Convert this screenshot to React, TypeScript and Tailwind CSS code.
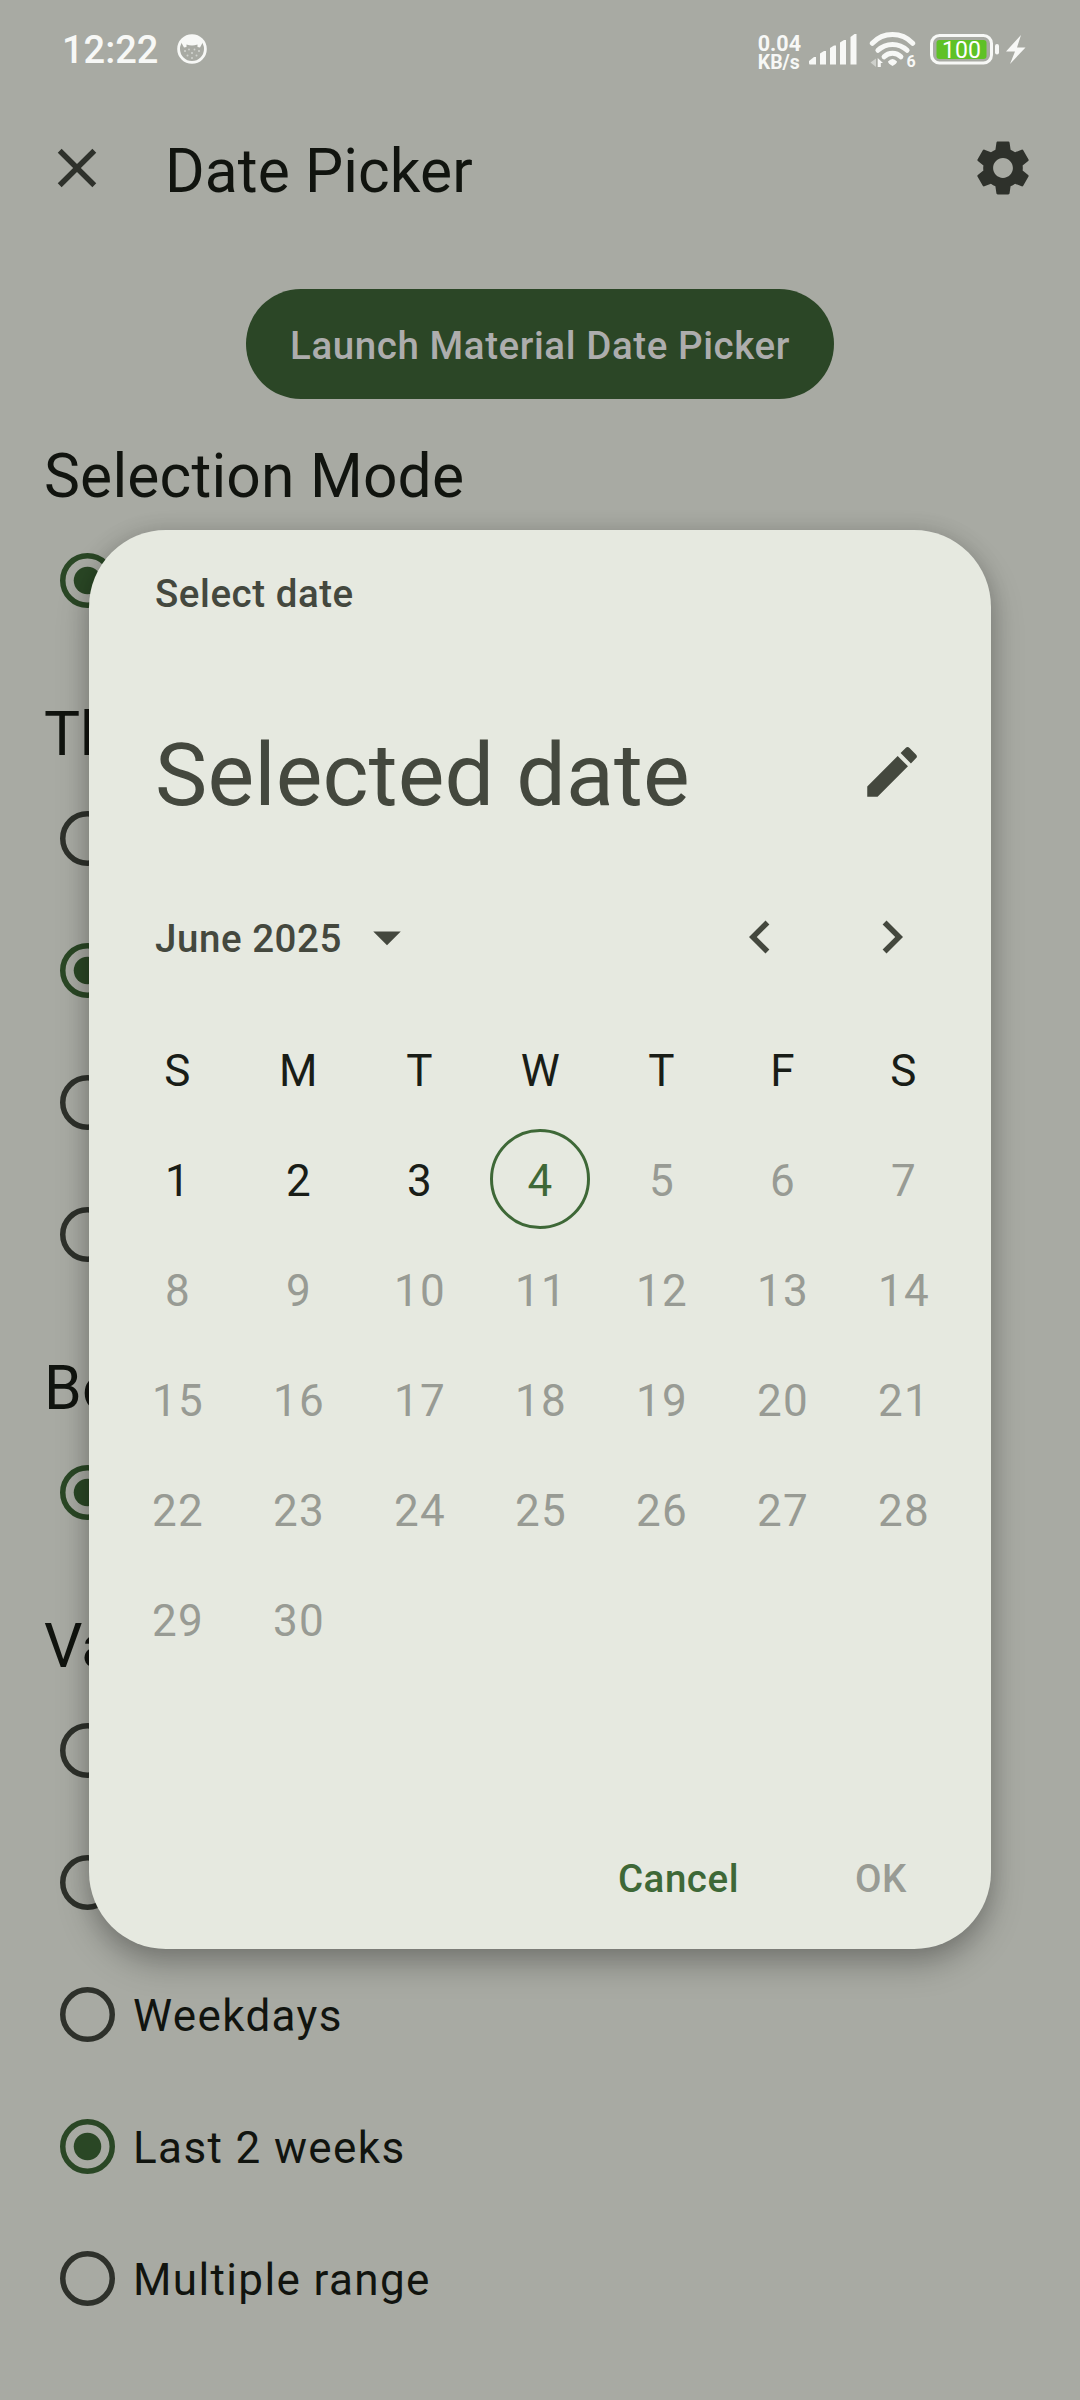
import type { ReactNode } from 'react';
import { MdArrowDropDown, MdChevronLeft, MdChevronRight, MdClose, MdEdit, MdSettings } from 'react-icons/md';

interface Option {
  label?: string;
  selected?: boolean;
}

interface OptionGroup {
  title: string;
  options: Option[];
}

const TODAY = 4;
const DAYS_IN_MONTH = 30;
const WEEKDAYS = ['S', 'M', 'T', 'W', 'T', 'F', 'S'];

const GROUPS: OptionGroup[] = [
  { title: 'Selection Mode', options: [{ selected: true }] },
  { title: 'Theme', options: [{}, { selected: true }, {}, {}] },
  { title: 'Bounds', options: [{ selected: true }] },
  {
    title: 'Validation',
    options: [
      {},
      {},
      { label: 'Weekdays' },
      { label: 'Last 2 weeks', selected: true },
      { label: 'Multiple range' }
    ]
  }
];

const FaceIcon = () => (
  <svg viewBox="0 0 32 32" className="ml-[18px] size-8">
    <circle cx="16" cy="16" r="13.4" fill="none" stroke="#f7f8f6" strokeWidth="2.8" />
    <path d="M5 9 Q16 -5 27 9 L24 14.5 L21.5 14 V11.5 Q16 13.5 10.5 11.5 V14 L8 14.5 Z" fill="#f7f8f6" />
    <g fill="#d0d2ce">
      <circle cx="9" cy="18" r="1.1" />
      <circle cx="13" cy="16.5" r="0.9" />
      <circle cx="18.5" cy="16.5" r="0.9" />
      <circle cx="23" cy="18" r="1.1" />
      <circle cx="16" cy="20" r="1.1" />
      <circle cx="11.5" cy="22.5" r="1" />
      <circle cx="20.5" cy="22.5" r="1" />
      <circle cx="16" cy="25" r="1" />
    </g>
  </svg>
);

const SignalIcon = () => (
  <svg viewBox="0 0 48 32" className="ml-[8px] h-8 w-12" fill="#f7f8f6">
    <path d="M0 28 L5 24 H7 V31.5 H1 Q0 31.5 0 30 Z" />
    <path d="M11 20.5 L15 18 H17 V31.5 H11 Z" />
    <path d="M21 15 L25 12.5 H27 V31.5 H21 Z" />
    <path d="M31 9.5 L35 7 H37 V31.5 H31 Z" />
    <path d="M41.5 4 L45.5 1 H47.5 V31.5 H41.5 Z" />
  </svg>
);

const WifiIcon = () => (
  <svg viewBox="0 0 48 38" className="-mt-px ml-3 h-[38px] w-12">
    <g fill="none" stroke="#f7f8f6" strokeWidth="5" strokeLinecap="round">
      <path d="M3.3 11.3 A27.8 27.8 0 0 1 43.7 11.3" />
      <path d="M8.9 18.3 A21 21 0 0 1 38.1 18.3" />
      <path d="M15.1 24.8 A11.5 11.5 0 0 1 31.9 24.8" />
    </g>
    <path d="M19 29.5 Q23.5 24.5 28 29.5 Q28 31.5 23.5 34 Q19 31.5 19 29.5 Z" fill="#f7f8f6" />
    <path d="M7 26.5 V35 L1.5 30.5 Z" fill="#ced0cb" />
    <path d="M8.7 35 V26 L14 31 H11.8 V35 Z" fill="#f7f8f6" />
    <text x="37.5" y="35.2" fontSize="16" fontWeight="700" fill="#f7f8f6">6</text>
  </svg>
);

const BatteryIcon = () => (
  <svg viewBox="0 0 96 32" className="ml-[13px] h-8 w-24">
    <rect x="1.5" y="2.5" width="60" height="27.5" rx="8" fill="none" stroke="#f7f8f6" strokeWidth="3" />
    <rect x="6.5" y="7" width="50" height="19" rx="3" fill="#5fc126" />
    <text x="31.5" y="25.4" fontSize="23" textAnchor="middle" fill="#ffffff">100</text>
    <rect x="65" y="11" width="4" height="10.5" rx="2" fill="#f7f8f6" />
    <path d="M91 2 L76 18.5 H85 L80 31 L95.5 14.5 H87 Z" fill="#f7f8f6" />
  </svg>
);

const StatusBar = () => (
  <header className="flex h-24 items-start pt-[33px] pr-[54px] pl-[62px] text-[#f7f8f6]">
    <span className="-mt-[5px] text-[38px] leading-[44px] font-medium">12:22</span>
    <FaceIcon />
    <div className="ml-auto flex items-start">
      <div className="flex flex-col pt-px text-[21.5px] leading-[19px] font-bold">
        <span>0.04</span>
        <span className="text-[19.5px]">KB/s</span>
      </div>
      <SignalIcon />
      <WifiIcon />
      <BatteryIcon />
    </div>
  </header>
);

const Radio = ({ selected }: { selected?: boolean }) => {
  const color = selected ? '#2a4725' : '#2e312b';

  return (
    <svg viewBox="0 0 20 20" className="size-[55px]">
      <circle cx="10" cy="10" r="9" fill="none" stroke={color} strokeWidth="2" />
      {selected && <circle cx="10" cy="10" r="5" fill={color} />}
    </svg>
  );
};

const IconButton = ({ children }: { children: ReactNode }) => (
  <button className="flex size-[132px] items-center justify-center text-[66px]">{children}</button>
);

const DayCell = ({ day }: { day: number }) => {
  if (day === TODAY) {
    return (
      <span className="-mt-[5px] -ml-[2px] flex size-[100px] items-center justify-center rounded-full border-3 border-[#3e6837] pt-[5px] pl-px text-[#3e6837]">
        {day}
      </span>
    );
  }
  return <span className={day > TODAY ? 'text-[#989b94]' : 'text-[#191d17]'}>{day}</span>;
};

const DatePickerDialog = () => (
  <div
    role="dialog"
    className="absolute top-[530px] left-[89px] flex h-[1419px] w-[902px] flex-col rounded-[77px] bg-[#e6e9e0] text-[#44483e] shadow-[0_16px_32px_rgba(0,0,0,0.26),0_0_22px_rgba(0,0,0,0.12)]"
  >
    <div className="px-[66px] pt-[36px] text-[38.5px] leading-[55px] font-medium tracking-[0.55px]">Select date</div>
    <div className="mt-[85px] flex h-[132px] items-center justify-between pr-[33px] pl-[66px]">
      <h2 className="pt-[5px] text-[88px] leading-[110px] tracking-[0.15px]">Selected date</h2>
      <IconButton>
        <MdEdit />
      </IconButton>
    </div>
    <div className="mt-[33px] flex h-[132px] items-center pr-[33px] pl-[66px]">
      <button className="flex items-center text-[38.5px] font-medium tracking-[0.55px]">
        <span className="pt-[3px]">June 2025</span>
        <MdArrowDropDown className="ml-[12px] text-[66px]" />
      </button>
      <div className="ml-auto flex">
        <IconButton>
          <MdChevronLeft />
        </IconButton>
        <IconButton>
          <MdChevronRight />
        </IconButton>
      </div>
    </div>
    <div className="mt-[13px] ml-[28.5px] grid w-[847px] auto-rows-[110px] grid-cols-7 place-items-center text-[44px] tracking-[1.375px] text-[#191d17]">
      {WEEKDAYS.map((name, index) => (
        <span key={index}>{name}</span>
      ))}
      {Array.from({ length: DAYS_IN_MONTH }, (_, index) => (
        <DayCell key={index} day={index + 1} />
      ))}
    </div>
    <div className="mt-auto mb-[15px] flex h-[110px] items-center justify-end pr-[84px] text-[38.5px] font-medium tracking-[0.55px]">
      <button className="text-[#3e6837]">Cancel</button>
      <button className="ml-[116px] text-[#989b94]">OK</button>
    </div>
  </div>
);

export default function App() {
  return (
    <div className="relative h-[2400px] w-[1080px] overflow-hidden bg-[#a8aaa3] font-[Roboto,sans-serif] text-[#11140f]">
      <StatusBar />
      <div className="flex h-36 items-center pr-[11px] pl-[11px]">
        <IconButton>
          <MdClose className="text-[#2e312b]" />
        </IconButton>
        <h1 className="ml-[22px] pt-[6px] text-[60.5px] leading-[77px] tracking-[0.1px]">Date Picker</h1>
        <div className="ml-auto">
          <IconButton>
            <MdSettings className="text-[#2e312b]" />
          </IconButton>
        </div>
      </div>
      <main className="flex flex-col pt-[49px]">
        <button className="h-[110px] w-[588px] self-center rounded-full bg-[#2b4626] pt-[3px] text-[38.5px] font-medium tracking-[0.58px] text-[#adadad]">
          Launch Material Date Picker
        </button>
        <div className="mt-[39px] flex flex-col gap-[50px]">
          {GROUPS.map((group) => (
            <section key={group.title}>
              <h2 className="h-[76px] pl-[44px] text-[60.5px] leading-[78px] tracking-[0.2px]">{group.title}</h2>
              {group.options.map((option, index) => (
                <div key={index} className="flex h-[132px] items-center pl-[60px]">
                  <Radio selected={option.selected} />
                  {option.label && (
                    <span className="ml-[18px] pt-[4px] text-[44px] tracking-[1.375px]">{option.label}</span>
                  )}
                </div>
              ))}
            </section>
          ))}
        </div>
      </main>
      <DatePickerDialog />
    </div>
  );
}
